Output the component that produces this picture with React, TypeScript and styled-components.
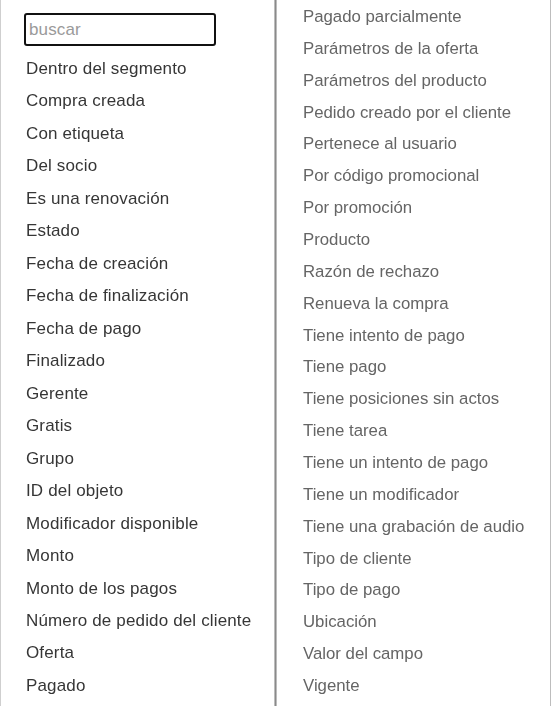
import React from 'react';
import styled, { createGlobalStyle } from 'styled-components';

const GlobalStyle = createGlobalStyle`
    html, body {
        margin: 0;
        padding: 0;
        background: #fff;
    }
    body {
        font-family: "Liberation Sans", Arial, sans-serif;
    }
`;

const StyledFilterMenu = styled.div`
    display: flex;
    width: 551px;
    height: 706px;
    overflow: hidden;
    box-sizing: border-box;
    border-left: 1px solid #cfcfcf;
    border-right: 1px solid #bdbdbd;
    background: #fff;
`;

const StyledColumn = styled.div<{ $side: 'left' | 'right' }>`
    display: flex;
    flex-direction: column;
    box-sizing: border-box;
    width: ${(p) => (p.$side === 'left' ? '274px' : '275px')};
    padding: 1px 0 0 23px;
    border-left: ${(p) => (p.$side === 'right' ? '1px solid #8a8a8a' : 'none')};
    border-right: ${(p) => (p.$side === 'left' ? '1px solid #bcbcbc' : 'none')};
    box-shadow: ${(p) => (p.$side === 'right' ? 'inset 1px 0 0 #bcbcbc' : 'none')};
`;

const SearchInput = styled.input`
    box-sizing: border-box;
    width: 192px;
    height: 33px;
    margin: 12px 0 7px 0;
    padding: 0 0 0 3px;
    border: 2px solid #111;
    border-radius: 3px;
    outline: none;
    font-family: inherit;
    font-size: 17px;
    letter-spacing: 0.15px;
    color: #333;
    &::placeholder {
        color: #9a9a9a;
    }
`;

const Option = styled.div<{ $muted?: boolean; $row: number }>`
    height: ${(p) => p.$row}px;
    line-height: ${(p) => p.$row}px;
    padding-left: ${(p) => (p.$muted ? '4px' : '2px')};
    font-size: ${(p) => (p.$muted ? '16.8px' : '17px')};
    letter-spacing: ${(p) => (p.$muted ? '0' : '0.15px')};
    white-space: nowrap;
    color: ${(p) => (p.$muted ? '#656565' : '#363636')};
    cursor: pointer;
`;

const leftOptions = [
    'Dentro del segmento',
    'Compra creada',
    'Con etiqueta',
    'Del socio',
    'Es una renovación',
    'Estado',
    'Fecha de creación',
    'Fecha de finalización',
    'Fecha de pago',
    'Finalizado',
    'Gerente',
    'Gratis',
    'Grupo',
    'ID del objeto',
    'Modificador disponible',
    'Monto',
    'Monto de los pagos',
    'Número de pedido del cliente',
    'Oferta',
    'Pagado',
];

const rightOptions = [
    'Pagado parcialmente',
    'Parámetros de la oferta',
    'Parámetros del producto',
    'Pedido creado por el cliente',
    'Pertenece al usuario',
    'Por código promocional',
    'Por promoción',
    'Producto',
    'Razón de rechazo',
    'Renueva la compra',
    'Tiene intento de pago',
    'Tiene pago',
    'Tiene posiciones sin actos',
    'Tiene tarea',
    'Tiene un intento de pago',
    'Tiene un modificador',
    'Tiene una grabación de audio',
    'Tipo de cliente',
    'Tipo de pago',
    'Ubicación',
    'Valor del campo',
    'Vigente',
];

const App: React.FunctionComponent = (): JSX.Element => {
    return (
        <>
            <GlobalStyle />
            <StyledFilterMenu>
                <StyledColumn $side="left">
                    <SearchInput placeholder="buscar" autoFocus />
                    {leftOptions.map((item) => (
                        <Option key={item} $row={32.47}>
                            {item}
                        </Option>
                    ))}
                </StyledColumn>
                <StyledColumn $side="right">
                    {rightOptions.map((item) => (
                        <Option key={item} $row={31.86} $muted>
                            {item}
                        </Option>
                    ))}
                </StyledColumn>
            </StyledFilterMenu>
        </>
    );
};

export default App;
